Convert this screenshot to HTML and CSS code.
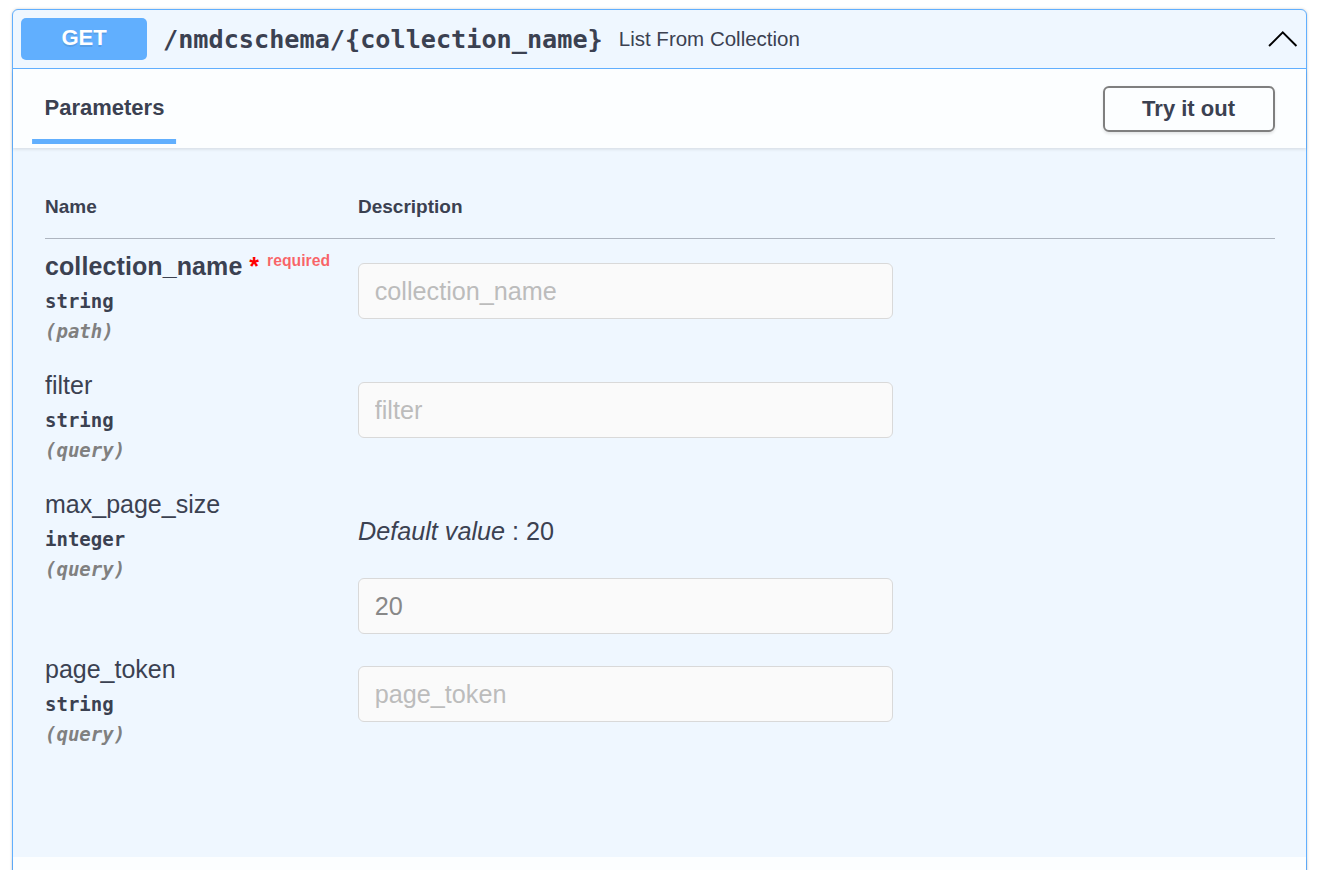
FILE: index.html
```html
<!DOCTYPE html>
<html lang="en">
<head>
<meta charset="utf-8">
<title>List From Collection</title>
<link rel="stylesheet" href="styles.css">
</head>
<body>
<div class="wrap">
  <div class="opblock">
    <div class="summary">
      <span class="method">GET</span>
      <span class="path">/nmdcschema/{collection_name}</span>
      <span class="summary-desc">List From Collection</span>
      <svg class="arrow" viewBox="0 0 20 20" width="31.5" height="31.5" aria-hidden="true">
        <polyline points="1.3,14.6 10,5.9 18.7,14.6" fill="none" stroke="#000" stroke-width="1.25" stroke-linecap="butt" stroke-linejoin="miter"/>
      </svg>
    </div>
    <div class="body">
      <div class="section-header">
        <div class="tab-item"><h4 class="tab-title"><span class="tab-label">Parameters</span></h4></div>
        <button class="btn" type="button">Try it out</button>
      </div>
      <div class="params">
        <table class="param-table">
          <thead>
            <tr>
              <th class="col-name">Name</th>
              <th class="col-desc">Description</th>
            </tr>
          </thead>
          <tbody>
            <tr>
              <td class="cell-name">
                <div class="param-name is-required"><span class="pn">collection_name</span><span class="star">&nbsp;*</span><span class="req">required</span></div>
                <div class="param-type">string</div>
                <div class="param-in">(path)</div>
              </td>
              <td class="cell-desc">
                <input class="param-input" type="text" placeholder="collection_name" disabled>
              </td>
            </tr>
            <tr>
              <td class="cell-name">
                <div class="param-name">filter</div>
                <div class="param-type">string</div>
                <div class="param-in">(query)</div>
              </td>
              <td class="cell-desc">
                <input class="param-input" type="text" placeholder="filter" disabled>
              </td>
            </tr>
            <tr>
              <td class="cell-name">
                <div class="param-name">max_page_size</div>
                <div class="param-type">integer</div>
                <div class="param-in">(query)</div>
              </td>
              <td class="cell-desc">
                <p class="default-value"><i>Default value</i> : 20</p>
                <input class="param-input" type="text" value="20" placeholder="max_page_size" disabled>
              </td>
            </tr>
            <tr>
              <td class="cell-name">
                <div class="param-name">page_token</div>
                <div class="param-type">string</div>
                <div class="param-in">(query)</div>
              </td>
              <td class="cell-desc">
                <input class="param-input" type="text" placeholder="page_token" disabled>
              </td>
            </tr>
          </tbody>
        </table>
      </div>
      <div class="section-header"></div>
    </div>
  </div>
</div>
</body>
</html>
```

FILE: styles.css
```css
html, body {
  margin: 0;
  padding: 0;
  height: 100%;
  overflow: hidden;
  background: #fff;
}

body {
  font-family: "Liberation Sans", Arial, sans-serif;
  color: #3b4151;
}

.wrap {
  padding: 9px 19px 0 12px;
}

.opblock {
  border: 1px solid #61affe;
  border-radius: 6px;
  background: #eff7ff;
  box-shadow: 0 0 3px rgba(0, 0, 0, 0.19);
}

/* ---------- summary ---------- */
.summary {
  display: flex;
  align-items: center;
  padding: 8px;
  border-bottom: 1px solid #61affe;
}

.method {
  min-width: 126px;
  padding: 8px 0 11px;
  font-size: 22px;
  line-height: 23px;
  font-weight: 700;
  text-align: center;
  color: #fff;
  background: #61affe;
  border-radius: 5px;
  text-shadow: 0 1.5px 0 rgba(0, 0, 0, 0.1);
}

.path {
  padding: 0 16px;
  font-family: "DejaVu Sans Mono", monospace;
  font-weight: 700;
  font-size: 25.2px;
  color: #3b4151;
}

.summary-desc {
  flex: 1;
  font-size: 20.5px;
  color: #3b4151;
}

.arrow {
  display: block;
  flex: none;
}

/* ---------- section header ---------- */
.section-header {
  display: flex;
  align-items: center;
  justify-content: space-between;
  min-height: 79px;
  box-sizing: border-box;
  padding: 12.6px 31.5px;
  background: rgba(255, 255, 255, 0.8);
  box-shadow: 0 1.5px 3px rgba(0, 0, 0, 0.1);
}

.tab-item {
  padding-bottom: 2px;
}

.tab-title {
  margin: 0;
  font-size: 22px;
  line-height: 25px;
  font-weight: 700;
  color: #3b4151;
}

.tab-label {
  position: relative;
  display: inline-block;
}

.tab-label::after {
  content: "";
  position: absolute;
  left: 50%;
  bottom: -24px;
  width: 120%;
  height: 5px;
  transform: translateX(-50%);
  background: #61affe;
}

.btn {
  font-family: "Liberation Sans", Arial, sans-serif;
  font-size: 22px;
  line-height: 25px;
  font-weight: 700;
  color: #3b4151;
  padding: 8.5px 37.5px;
  background: transparent;
  border: 2px solid #7f7f7f;
  border-radius: 6px;
  box-shadow: 0 1.5px 3px rgba(0, 0, 0, 0.1);
}

/* ---------- parameters ---------- */
.params {
  padding: 28px 31px 96px 32px;
}

.param-table {
  width: 100%;
  border-collapse: collapse;
}

.param-table th {
  padding: 20px 0 20px;
  font-size: 19px;
  line-height: 22px;
  font-weight: 700;
  text-align: left;
  color: #3b4151;
  border-bottom: 1px solid rgba(59, 65, 81, 0.2);
}

.col-name {
  width: 313px;
}

.cell-name {
  vertical-align: top;
  padding: 11px 0 16px 0;
}

.cell-desc {
  vertical-align: top;
  padding: 16px 0 0 0;
}

.param-name {
  font-size: 25px;
  line-height: 32px;
  color: #3b4151;
  white-space: nowrap;
}

.param-name.is-required .pn {
  font-weight: 700;
  letter-spacing: 0.1px;
}

.star {
  color: #ff0000;
  font-weight: 700;
}

.req {
  font-size: 15.75px;
  line-height: 1;
  font-weight: 700;
  color: rgba(255, 0, 0, 0.6);
  padding: 0 8px;
  vertical-align: 9.5px;
}

.param-type {
  padding: 8px 0;
  font-family: "DejaVu Sans Mono", monospace;
  font-size: 19px;
  line-height: 22px;
  font-weight: 700;
  color: #3b4151;
}

.param-in {
  font-family: "DejaVu Sans Mono", monospace;
  font-size: 19px;
  line-height: 22px;
  font-weight: 700;
  font-style: italic;
  color: #808080;
}

.default-value {
  margin: 24px 0 32px;
  font-size: 25.2px;
  line-height: 29px;
  color: #3b4151;
}

.param-input {
  display: block;
  box-sizing: border-box;
  width: 535px;
  margin: 8px 0;
  padding: 12.6px 15.75px;
  font-family: "Liberation Sans", Arial, sans-serif;
  font-size: 25.2px;
  line-height: 29px;
  color: #888;
  background: #fafafa;
  border: 1px solid #d9d9d9;
  border-radius: 6px;
  outline: none;
}

.param-input::placeholder {
  color: #bcbcbc;
  opacity: 1;
}
```
